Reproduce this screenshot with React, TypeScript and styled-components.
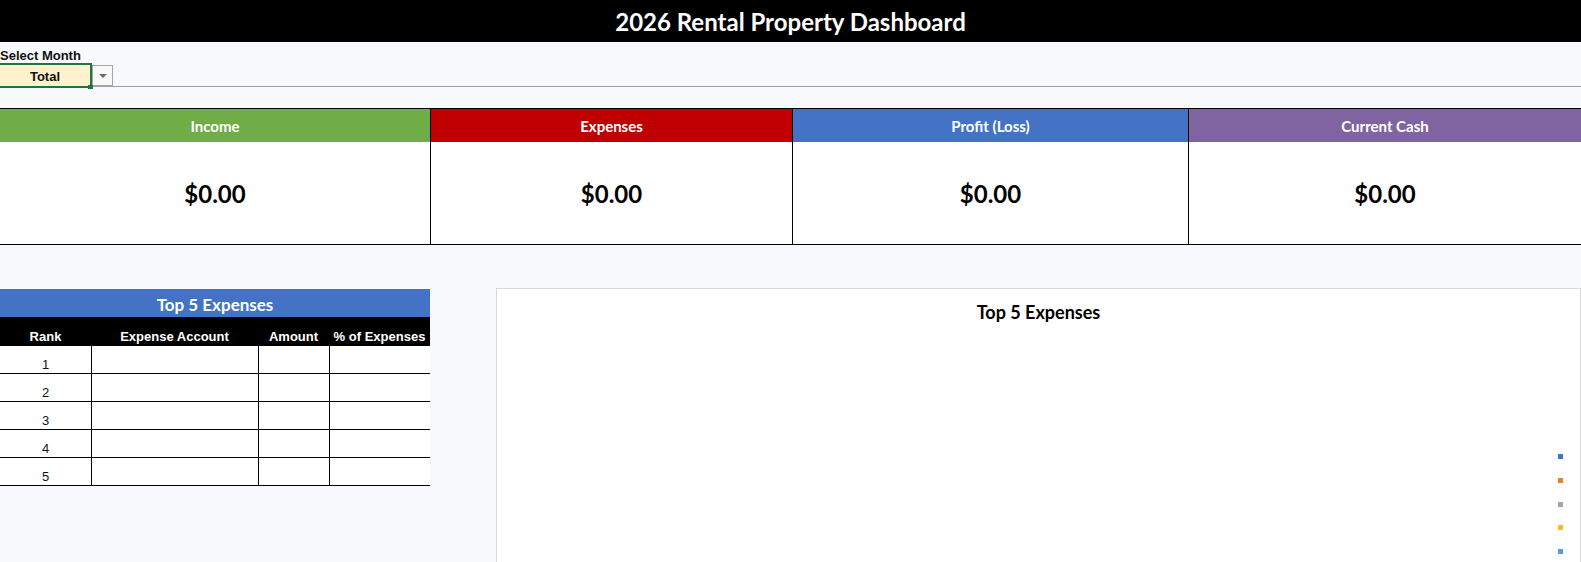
import React from "react";
import styled, { createGlobalStyle } from "styled-components";

const GlobalStyle = createGlobalStyle`
  html, body {
    margin: 0;
    padding: 0;
    background: #f7f9fc;
    overflow: hidden;
  }
  * { box-sizing: border-box; }
`;

const calibri = `"Lato", "Open Sans", sans-serif`;
const arial = `"Liberation Sans", Arial, sans-serif`;

const Page = styled.div`
  width: 1581px;
  min-height: 562px;
  background: #f7f9fc;
  display: flex;
  flex-direction: column;
  & > * { flex-shrink: 0; }
`;

const TitleBar = styled.header`
  height: 42px;
  background: #000;
  color: #fff;
  font-family: ${calibri};
  font-weight: 700;
  font-size: 24px;
  display: flex;
  align-items: center;
  justify-content: center;
`;

const Controls = styled.section`
  height: 45px;
  padding-top: 6px;
  border-bottom: 1px solid #a0a0a0;
  display: flex;
  flex-direction: column;
`;

const Label = styled.div`
  font-family: ${arial};
  font-weight: 700;
  font-size: 13px;
  line-height: 15px;
  color: #111;
`;

const DropRow = styled.div`
  height: 23px;
  display: flex;
  align-items: flex-start;
`;

const SelectCell = styled.div`
  position: relative;
  z-index: 1;
  width: 92px;
  height: 25px;
  background: #fff2cc;
  border: 2px solid #217346;
  border-left: none;
  display: flex;
  align-items: flex-end;
  justify-content: center;
  padding-bottom: 2px;
  font-family: ${arial};
  font-weight: 700;
  font-size: 13px;
  line-height: 15px;
  color: #111;
`;

const FillHandle = styled.span`
  position: absolute;
  right: -3px;
  bottom: -3px;
  width: 5px;
  height: 4px;
  background: #217346;
`;

const DropButton = styled.div`
  margin-top: 2px;
  width: 21px;
  height: 21px;
  border: 1px solid #a6a6a6;
  background: #f8f8f8;
  display: flex;
  align-items: center;
  justify-content: center;
`;

const Caret = styled.span`
  width: 0;
  height: 0;
  border-left: 4px solid transparent;
  border-right: 4px solid transparent;
  border-top: 4px solid #6b6b6b;
`;

const KpiGrid = styled.section`
  margin-top: 21px;
  display: grid;
  grid-template-columns: 430px 362px 396px 1fr;
  border-top: 1px solid #000;
  border-bottom: 1px solid #000;
`;

const KpiCard = styled.div<{ $first?: boolean }>`
  display: flex;
  flex-direction: column;
  border-left: ${(p) => (p.$first ? "none" : "1px solid #000")};
`;

const KpiHeader = styled.div<{ $color: string }>`
  height: 33px;
  background: ${(p) => p.$color};
  color: #fff;
  font-family: ${calibri};
  font-weight: 700;
  font-size: 15px;
  line-height: 18px;
  display: flex;
  align-items: center;
  justify-content: center;
`;

const KpiValue = styled.div`
  height: 102px;
  background: #fff;
  color: #000;
  font-family: ${calibri};
  font-weight: 700;
  font-size: 24px;
  display: flex;
  align-items: center;
  justify-content: center;
`;

const Bottom = styled.section`
  margin-top: 43px;
  display: flex;
  align-items: flex-start;
`;

const TableBlock = styled.div`
  width: 430px;
  margin-top: 1px;
  flex-shrink: 0;
`;

const TableTitle = styled.div`
  height: 28px;
  background: #4472c4;
  color: #fff;
  font-family: ${calibri};
  font-weight: 700;
  font-size: 17px;
  line-height: 20px;
  display: flex;
  justify-content: center;
  align-items: flex-start;
  padding-top: 6px;
`;

const cols = "91px 167px 71px 101px";

const HeaderRow = styled.div`
  height: 29px;
  background: #000;
  display: grid;
  grid-template-columns: ${cols};
`;

const HeadCell = styled.div`
  color: #fff;
  font-family: ${arial};
  font-weight: 700;
  font-size: 13px;
  line-height: 15px;
  display: flex;
  align-items: flex-end;
  justify-content: center;
  padding-bottom: 2px;
  white-space: nowrap;
`;

const DataRow = styled.div`
  height: 28px;
  display: grid;
  grid-template-columns: ${cols};
  border-bottom: 1px solid #000;
  background: #fff;
`;

const DataCell = styled.div<{ $first?: boolean }>`
  border-left: ${(p) => (p.$first ? "none" : "1px solid #000")};
  color: #111;
  font-family: ${arial};
  font-size: 13px;
  line-height: 15px;
  display: flex;
  align-items: flex-end;
  justify-content: center;
  padding-bottom: 1px;
`;

const Chart = styled.div`
  position: relative;
  margin-left: 66px;
  width: 1085px;
  height: 290px;
  background: #fff;
  border: 1px solid #d9d9d9;
  display: flex;
  flex-direction: column;
`;

const ChartTitle = styled.div`
  padding-top: 12px;
  text-align: center;
  font-family: ${calibri};
  font-weight: 700;
  font-size: 18px;
  line-height: 22px;
  color: #000;
`;

const Legend = styled.div`
  align-self: flex-end;
  margin-top: 131px;
  margin-right: 17px;
  display: flex;
  flex-direction: column;
  gap: 18.75px;
`;

const Swatch = styled.span<{ $color: string }>`
  display: block;
  width: 5px;
  height: 5px;
  background: ${(p) => p.$color};
`;

const kpis = [
  { label: "Income", color: "#70ad47", value: "$0.00" },
  { label: "Expenses", color: "#c00000", value: "$0.00" },
  { label: "Profit (Loss)", color: "#4472c4", value: "$0.00" },
  { label: "Current Cash", color: "#8064a2", value: "$0.00" },
];

const legendColors = ["#4472c4", "#ed7d31", "#a5a5a5", "#ffc000", "#5b9bd5"];

export default function App() {
  return (
    <>
      <GlobalStyle />
      <Page>
        <TitleBar>2026 Rental Property Dashboard</TitleBar>
        <Controls>
          <Label>Select Month</Label>
          <DropRow>
            <SelectCell>
              Total
              <FillHandle />
            </SelectCell>
            <DropButton>
              <Caret />
            </DropButton>
          </DropRow>
        </Controls>
        <KpiGrid>
          {kpis.map((k, i) => (
            <KpiCard key={k.label} $first={i === 0}>
              <KpiHeader $color={k.color}>{k.label}</KpiHeader>
              <KpiValue>{k.value}</KpiValue>
            </KpiCard>
          ))}
        </KpiGrid>
        <Bottom>
          <TableBlock>
            <TableTitle>Top 5 Expenses</TableTitle>
            <HeaderRow>
              <HeadCell>Rank</HeadCell>
              <HeadCell>Expense Account</HeadCell>
              <HeadCell>Amount</HeadCell>
              <HeadCell>% of Expenses</HeadCell>
            </HeaderRow>
            {[1, 2, 3, 4, 5].map((n) => (
              <DataRow key={n}>
                <DataCell $first>{n}</DataCell>
                <DataCell />
                <DataCell />
                <DataCell />
              </DataRow>
            ))}
          </TableBlock>
          <Chart>
            <ChartTitle>Top 5 Expenses</ChartTitle>
            <Legend>
              {legendColors.map((c) => (
                <Swatch key={c} $color={c} />
              ))}
            </Legend>
          </Chart>
        </Bottom>
      </Page>
    </>
  );
}
